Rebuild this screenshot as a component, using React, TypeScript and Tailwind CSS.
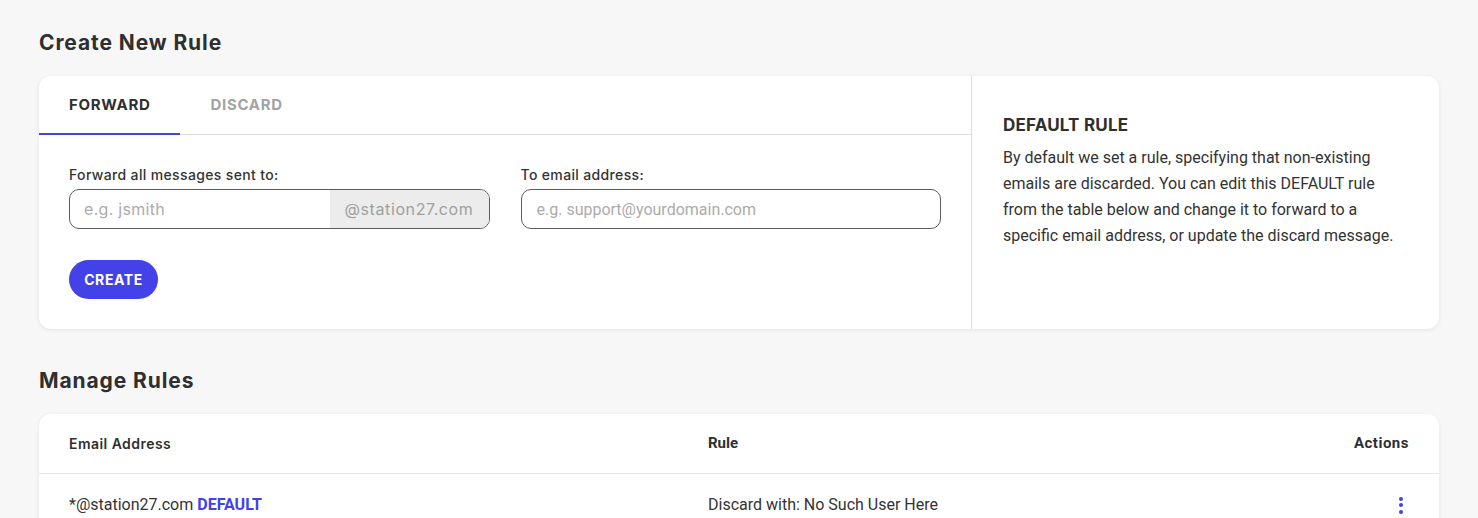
import { useState } from 'react'

function Tabs({ active, onChange }: { active: string; onChange: (t: string) => void }) {
    const tabs = ['FORWARD', 'DISCARD']
    return (
        <div className="flex border-b border-[#dedede] h-[59px]">
            {tabs.map(t => (
                <button
                    key={t}
                    onClick={() => onChange(t)}
                    className={`px-[30px] -mb-px pt-[2px] font-['Inter'] text-[15px] font-bold tracking-[0.7px] border-b-2 ${active === t ? 'text-[#2f2f2f] border-[#4242e6]' : 'text-[#a3a3a3] border-transparent'}`}
                >
                    {t}
                </button>
            ))}
        </div>
    )
}

function Dots() {
    return (
        <button className="w-[16px] flex flex-col items-center gap-[2.5px]">
            <span className="w-[4px] h-[4px] rounded-full bg-[#4242e8]" />
            <span className="w-[4px] h-[4px] rounded-full bg-[#4242e8]" />
            <span className="w-[4px] h-[4px] rounded-full bg-[#4242e8]" />
        </button>
    )
}

export default function App() {
    const [tab, setTab] = useState('FORWARD')

    return (
        <div className="min-h-screen bg-[#f7f7f7] px-[39px] pt-[29px] pb-10 font-['Roboto'] text-[#333]">
            <h1 className="font-['Inter'] text-[21px] font-bold text-[#2f2f2f] leading-[28px] tracking-[0.9px]">Create New Rule</h1>

            {/* Create card */}
            <div className="mt-[19px] bg-white rounded-[12px] shadow-[0_1px_4px_rgba(0,0,0,0.08)] flex h-[253px] overflow-hidden">
                <div className="w-[933px] border-r border-[#dedede]">
                    <Tabs active={tab} onChange={setTab} />
                    <div className="px-[30px] pt-[31px]">
                        <div className="grid grid-cols-2 gap-[31px]">
                            <div>
                                <label className="block font-['Inter'] text-[14px] font-medium text-[#333] leading-[18px] tracking-[0.35px]">Forward all messages sent to:</label>
                                <div className="mt-[5px] flex h-[40px] rounded-[10px] border border-[#5c5c5c] overflow-hidden font-['Inter'] text-[16px]">
                                    <input
                                        placeholder="e.g. jsmith"
                                        className="flex-1 min-w-0 px-[14px] outline-none tracking-[0.3px] placeholder:text-[#ababab]"
                                    />
                                    <span className="w-[159px] bg-[#ececec] flex items-center pl-[15px] text-[#a0a0a0] tracking-[0.6px]">@station27.com</span>
                                </div>
                            </div>
                            <div>
                                <label className="block font-['Inter'] text-[14px] font-medium text-[#333] leading-[18px] tracking-[0.35px]">To email address:</label>
                                <input
                                    placeholder="e.g. support@yourdomain.com"
                                    className="mt-[5px] w-full h-[40px] rounded-[10px] border border-[#5c5c5c] px-[15px] text-[16px] outline-none placeholder:text-[#ababab]"
                                />
                            </div>
                        </div>
                        <button className="mt-[31px] h-[39px] w-[89px] rounded-full bg-[#4242e8] text-white font-['Inter'] text-[14px] font-bold tracking-[0.6px]">
                            CREATE
                        </button>
                    </div>
                </div>
                <div className="flex-1 pl-[31px] pr-[30px] pt-[38px]">
                    <h3 className="font-['Inter'] text-[17px] font-bold text-[#2f2f2f] leading-[22px] tracking-[0.2px]">DEFAULT RULE</h3>
                    <p className="mt-[9px] text-[16px] leading-[26px] text-[#333]">
                        By default we set a rule, specifying that non-existing emails are discarded. You can edit this DEFAULT rule from the table below and change it to forward to a specific email address, or update the discard message.
                    </p>
                </div>
            </div>

            <h2 className="mt-[38px] font-['Inter'] text-[21px] font-bold text-[#2f2f2f] leading-[28px] tracking-[0.9px]">Manage Rules</h2>

            {/* Rules table */}
            <div className="mt-[19px] bg-white rounded-[12px] shadow-[0_1px_4px_rgba(0,0,0,0.08)]">
                <div className="grid grid-cols-[639px_1fr_auto] px-[30px] h-[60px] items-center border-b border-[#e6e6e6] text-[#2f2f2f]">
                    <span className="font-['Inter'] text-[14px] font-semibold tracking-[0.45px]">Email Address</span>
                    <span className="text-[15px] font-bold">Rule</span>
                    <span className="text-[15px] font-bold tracking-[0.5px]">Actions</span>
                </div>
                <div className="grid grid-cols-[639px_1fr_auto] px-[30px] pt-[2px] h-[60px] items-center text-[16px] text-[#333]">
                    <span>*@station27.com <span className="font-bold text-[#4242e8]">DEFAULT</span></span>
                    <span>Discard with: No Such User Here</span>
                    <Dots />
                </div>
            </div>
        </div>
    )
}
